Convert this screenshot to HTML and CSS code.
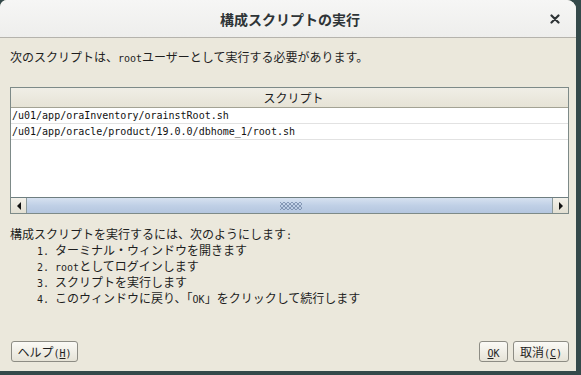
FILE: index.html
```html
<!DOCTYPE html>
<html lang="ja">
	<head>
		<meta charset="UTF-8">
		<title>構成スクリプトの実行</title>
		<link rel="stylesheet" href="styles.css">
	</head>
	<body>
		<div class="window">
			<div class="titlebar">
				<span class="title">構成スクリプトの実行</span>
				<span class="close">
					<svg width="10" height="10" viewBox="0 0 10 10">
						<path d="M1.5 1.5 L8.5 8.5 M8.5 1.5 L1.5 8.5" stroke="#2e3436" stroke-width="2.2" stroke-linecap="round"/>
					</svg>
				</span>
			</div>

			<div class="content">
				<p class="message">次のスクリプトは、<span class="mono">root</span>ユーザーとして実行する必要があります。</p>

				<div class="table">
					<div class="table-header">スクリプト</div>
					<div class="table-body">
						<div class="row mono">/u01/app/oraInventory/orainstRoot.sh</div>
						<div class="row mono">/u01/app/oracle/product/19.0.0/dbhome_1/root.sh</div>
					</div>
					<div class="scrollbar">
						<div class="scroll-btn"><span class="arrow left"></span></div>
						<div class="scroll-thumb"><span class="grip"></span></div>
						<div class="scroll-btn"><span class="arrow right"></span></div>
					</div>
				</div>

				<div class="steps">
					<div class="line">構成スクリプトを実行するには、次のようにします<span class="mono">:</span></div>
					<div class="line step"><span class="mono">1. </span>ターミナル・ウィンドウを開きます</div>
					<div class="line step"><span class="mono">2. root</span>としてログインします</div>
					<div class="line step"><span class="mono">3. </span>スクリプトを実行します</div>
					<div class="line step"><span class="mono">4. </span>このウィンドウに戻り、「<span class="mono">OK</span>」をクリックして続行します</div>
				</div>

				<div class="buttons">
					<button class="help">ヘルプ<span class="mono">(<u>H</u>)</span></button>
					<div class="button-group">
						<button class="ok"><span class="mono"><u>O</u>K</span></button>
						<button class="cancel">取消<span class="mono">(<u>C</u>)</span></button>
					</div>
				</div>
			</div>
		</div>
	</body>
</html>
```

FILE: styles.css
```css
body {
    margin: 0;
    background-color: #34494a;
    font-family: "Noto Sans CJK JP", "DejaVu Sans", sans-serif;
    font-size: 12px;
    color: #1e1e1e;
}

.mono {
    font-family: "DejaVu Sans Mono", "Liberation Mono", monospace;
    font-size: 10px;
}

.window {
    width: 576px;
    height: 371px;
    background-color: #ebe8dc;
    border-radius: 7px 9px 0 0;
    overflow: hidden;
    display: flex;
    flex-direction: column;
}

.titlebar {
    height: 37px;
    flex-shrink: 0;
    background: linear-gradient(#f6f6f5, #eeeeec);
    border-bottom: 1px solid #b5b3ac;
    display: flex;
    align-items: center;
    justify-content: center;
    position: relative;
}

.title {
    font-weight: bold;
    font-size: 14px;
    color: #2e3436;
    margin-left: 4px;
}

.close {
    position: absolute;
    right: 16px;
    top: 14px;
    line-height: 0;
}

.content {
    flex: 1;
    padding: 0 7px 0 10px;
    display: flex;
    flex-direction: column;
}

.message {
    margin: 11px 0 0 0;
    line-height: 16px;
    height: 16px;
}

.table {
    margin-top: 22px;
    border: 1px solid #7d8a88;
    background-color: #ffffff;
    display: flex;
    flex-direction: column;
}

.table-header {
    height: 19px;
    line-height: 19px;
    text-align: center;
    background: linear-gradient(#f0eee6, #e6e3d6);
    border-bottom: 1px solid #a3a294;
    padding-left: 8px;
}

.table-body {
    height: 89px;
}

.row {
    height: 15px;
    line-height: 15px;
    border-bottom: 1px solid #e2e2e2;
    padding-left: 1px;
    color: #111111;
}

.scrollbar {
    height: 15px;
    display: flex;
    border-top: 1px solid #6e7e80;
}

.scroll-btn {
    width: 15px;
    background: linear-gradient(#f3f1ea, #e2dfd2);
    border-left: 1px solid #8c9a9c;
    border-right: 1px solid #8c9a9c;
    display: flex;
    align-items: center;
    justify-content: center;
}

.scroll-btn:first-child {
    border-left: none;
}

.scroll-btn:last-child {
    border-right: none;
}

.arrow {
    width: 0;
    height: 0;
    border-top: 4px solid transparent;
    border-bottom: 4px solid transparent;
}

.arrow.left {
    border-right: 4px solid #111111;
}

.arrow.right {
    border-left: 4px solid #111111;
}

.scroll-thumb {
    flex: 1;
    background: linear-gradient(#d6e1f0, #c0d0e6 50%, #b4c6df);
    display: flex;
    align-items: center;
    justify-content: center;
}

.grip {
    width: 22px;
    height: 8px;
    background-image:
        radial-gradient(circle, #62779a 0.6px, transparent 0.9px),
        radial-gradient(circle, #62779a 0.6px, transparent 0.9px);
    background-size: 4px 4px;
    background-position: 0 0, 2px 2px;
    margin-left: 2px;
}

.steps {
    margin-top: 12px;
}

.line {
    height: 16px;
    line-height: 16px;
}

.line .mono {
    line-height: 10px;
}

.step {
    padding-left: 27px;
}

.buttons {
    margin-top: auto;
    margin-bottom: 9px;
    display: flex;
    justify-content: space-between;
    align-items: flex-end;
}

.button-group {
    display: flex;
    gap: 5px;
}

button {
    height: 21px;
    padding: 0 5px;
    font-family: inherit;
    font-size: 12px;
    color: #1e1e1e;
    background: linear-gradient(#fbfaf6, #e6e3d7);
    border: 1px solid #8d8c84;
    border-radius: 3px;
    line-height: 19px;
}

button.help {
    width: 67px;
    margin-left: 1px;
}

button.ok {
    width: 29px;
}

button.cancel {
    width: 56px;
}
```
